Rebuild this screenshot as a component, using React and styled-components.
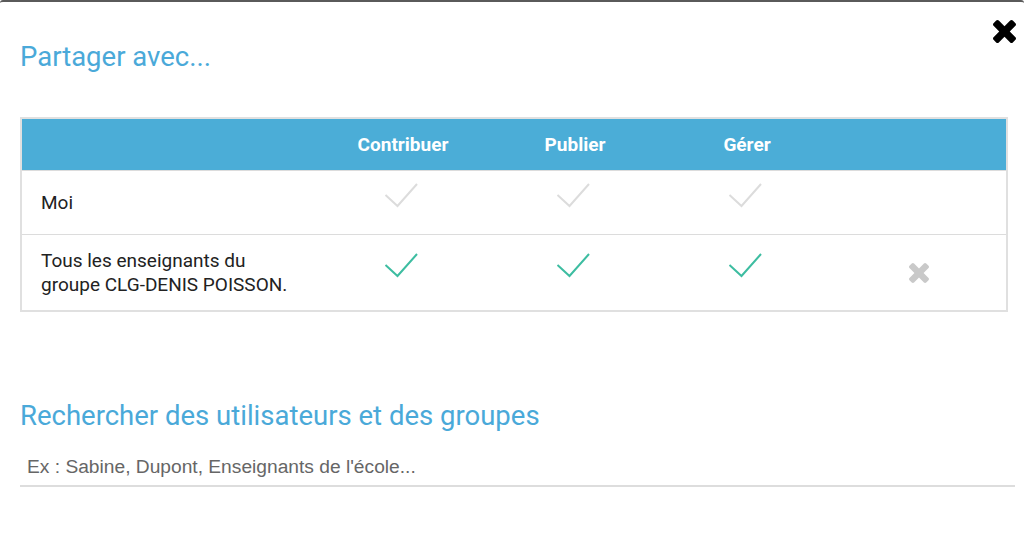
import React from 'react';
import styled, { createGlobalStyle } from 'styled-components';

const GlobalStyle = createGlobalStyle`
  html, body {
    margin: 0;
    padding: 0;
    background: #ffffff;
  }
  * {
    box-sizing: border-box;
  }
`;

const Modal = styled.div`
  position: relative;
  width: 1024px;
  height: 545px;
  background: #fff;
  border-top: 2px solid #5a5a5a;
  border-top-left-radius: 3px;
  border-top-right-radius: 3px;
  padding: 38px 9px 0 20px;
  font-family: Roboto, "Noto Sans", sans-serif;
  overflow: hidden;
`;

const CloseButton = styled.button`
  position: absolute;
  top: 18px;
  right: 8px;
  width: 23px;
  height: 23px;
  padding: 0;
  border: none;
  background: none;
  cursor: pointer;
  display: flex;
  align-items: center;
  justify-content: center;
`;

const Title = styled.h2`
  margin: 0;
  font-size: 27.5px;
  line-height: 34px;
  font-weight: 400;
  color: #4aa9d9;
`;

const Table = styled.div`
  margin-top: 43px;
  width: 988px;
  border: 2px solid #e0e0e0;
`;

const Row = styled.div`
  display: grid;
  grid-template-columns: 295px repeat(4, 172px);
  align-items: center;
  min-height: ${(p) => p.height}px;
  border-top: ${(p) => (p.first ? 'none' : '1px solid #dcdcdc')};
  background: ${(p) => (p.head ? '#4badd7' : '#fff')};
`;

const HeadCell = styled.div`
  color: #fff;
  font-weight: 700;
  font-size: 19px;
  text-align: center;
`;

const NameCell = styled.div`
  padding: 0 10px 0 19px;
  font-size: 19px;
  line-height: 24px;
  color: #222;
`;

const IconCell = styled.div`
  display: flex;
  justify-content: center;
  align-items: center;
  padding-bottom: ${(p) => p.lift || 0}px;
  padding-right: ${(p) => p.shift || 0}px;
`;

const RemoveButton = styled.button`
  border: none;
  background: none;
  padding: 0;
  cursor: pointer;
  display: flex;
`;

const SearchTitle = styled(Title)`
  margin-top: 87px;
`;

const SearchInput = styled.input`
  display: block;
  margin-top: 16px;
  width: 995px;
  height: 38px;
  border: none;
  border-bottom: 2px solid #dddddd;
  outline: none;
  padding: 0 7px;
  font-family: "Liberation Sans", Arial, sans-serif;
  font-size: 19.2px;
  color: #333;
  &::placeholder {
    color: #666;
  }
`;

const TIMES =
  'M1298 1214q0 40-28 68l-136 136q-28 28-68 28t-68-28l-294-294-294 294q-28 28-68 28t-68-28l-136-136q-28-28-28-68t28-68l294-294-294-294q-28-28-28-68t28-68l136-136q28-28 68-28t68 28l294 294 294-294q28-28 68-28t68 28l136 136q28 28 28 68t-28 68l-294 294 294 294q28 28 28 68z';

const TimesIcon = ({ size, color }) => (
  <svg width={size} height={size} viewBox="110 258 1188 1188">
    <path d={TIMES} fill={color} />
  </svg>
);

const Check = ({ on }) => (
  <svg width="34" height="25" viewBox="0 0 34 25">
    <polyline
      points="1.5,12 13.5,23 33,1"
      fill="none"
      stroke={on ? '#3dbda1' : '#dcdcdc'}
      strokeWidth="2"
    />
  </svg>
);

const rights = ['Contribuer', 'Publier', 'Gérer'];

const shares = [
  { id: 'me', name: 'Moi', active: false, removable: false },
  {
    id: 'group',
    name: (
      <>
        Tous les enseignants du
        <br />
        groupe CLG-DENIS POISSON.
      </>
    ),
    active: true,
    removable: true,
  },
];

export default function App() {
  return (
    <>
      <GlobalStyle />
      <Modal>
        <CloseButton aria-label="Fermer">
          <TimesIcon size={23} color="#000" />
        </CloseButton>
        <Title>Partager avec...</Title>

        <Table>
          <Row head first height={51}>
            <div />
            {rights.map((r) => (
              <HeadCell key={r}>{r}</HeadCell>
            ))}
            <div />
          </Row>
          {shares.map((s, i) => (
            <Row key={s.id} height={i === 0 ? 64 : 76}>
              <NameCell>{s.name}</NameCell>
              {rights.map((r) => (
                <IconCell key={r} lift={14} shift={4}>
                  <Check on={s.active} />
                </IconCell>
              ))}
              <IconCell>
                {s.removable && (
                  <RemoveButton aria-label="Retirer">
                    <TimesIcon size={20} color="#c9c9c9" />
                  </RemoveButton>
                )}
              </IconCell>
            </Row>
          ))}
        </Table>

        <SearchTitle>Rechercher des utilisateurs et des groupes</SearchTitle>
        <SearchInput placeholder="Ex : Sabine, Dupont, Enseignants de l'école..." />
      </Modal>
    </>
  );
}
